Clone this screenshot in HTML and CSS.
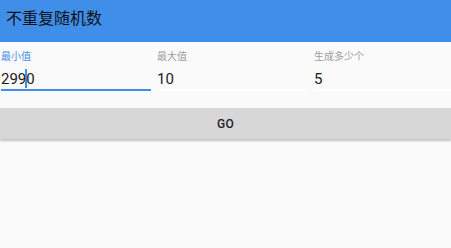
FILE: index.html
```html
<!DOCTYPE html>
<html lang="zh">
<head>
<meta charset="utf-8">
<title>不重复随机数</title>
<link rel="stylesheet" href="styles.css">
</head>
<body>
<header class="appbar">
  <h1 class="title">不重复随机数</h1>
</header>
<main class="content">
  <div class="fields">
    <div class="field field-active">
      <div class="label">最小值</div>
      <div class="value">299<span class="caret"></span>0</div>
    </div>
    <div class="field">
      <div class="label">最大值</div>
      <div class="value">10</div>
    </div>
    <div class="field">
      <div class="label">生成多少个</div>
      <div class="value">5</div>
    </div>
  </div>
  <button class="go" type="button">GO</button>
</main>
</body>
</html>
```

FILE: styles.css
```css
html, body {
  margin: 0;
  padding: 0;
}
body {
  background: #fafafa;
  font-family: Roboto, "Noto Sans CJK SC", "Noto Sans", sans-serif;
  color: #1a1a1a;
  width: 451px;
  height: 248px;
  overflow: hidden;
}
.appbar {
  height: 42px;
  background: #3f8fea;
  box-sizing: border-box;
  padding: 9px 0 0 6px;
}
.title {
  margin: 0;
  font-size: 16px;
  line-height: 20px;
  font-weight: 400;
  color: #111;
}
.fields {
  display: grid;
  grid-template-columns: 151px 153px 1fr;
  column-gap: 4px;
  padding-top: 9px;
}
.field {
  padding-left: 1px;
}
.field + .field {
  padding-left: 2px;
}
.label {
  font-size: 10px;
  line-height: 12px;
  color: #9e9e9e;
}
.field-active .label {
  color: #3f8fea;
}
.value {
  margin-top: 6px;
  font-size: 15px;
  line-height: 20px;
  padding-bottom: 0;
  border-bottom: 2px solid #ffffff;
  color: #1a1a1a;
  white-space: nowrap;
}
.field-active .value {
  border-bottom-color: #3f8fea;
}
.caret {
  display: inline-block;
  width: 2px;
  height: 19px;
  background: #3f8fea;
  vertical-align: -4px;
  margin: 0 -1px;
}
.go {
  display: block;
  width: 100%;
  height: 31px;
  margin-top: 17px;
  border: 0;
  padding: 1px 0 0;
  background: #d6d7d6;
  box-shadow: 0 2px 2px rgba(0, 0, 0, 0.22);
  font-family: Roboto, "Noto Sans", sans-serif;
  font-size: 12px;
  font-weight: 500;
  color: #222;
  letter-spacing: 0.3px;
}
```
